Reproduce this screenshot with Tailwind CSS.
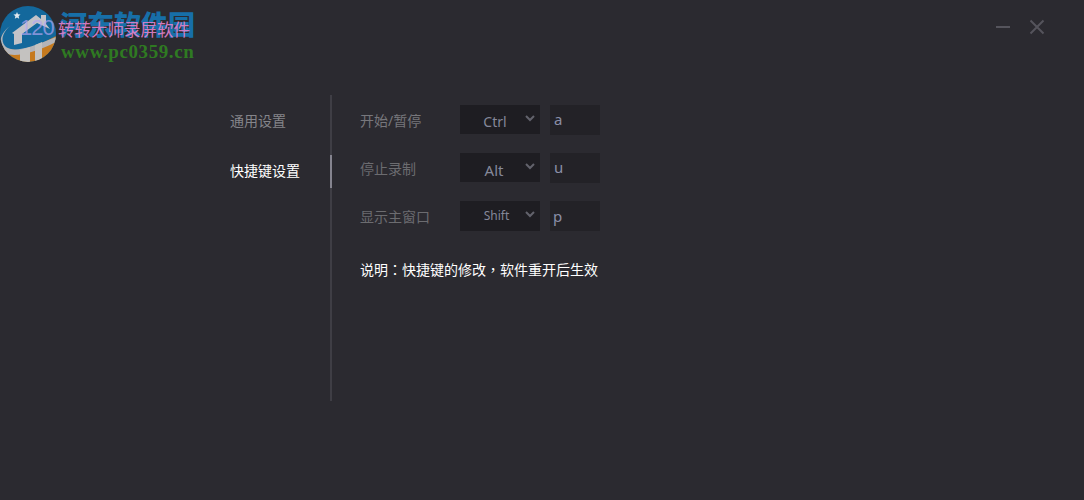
<!DOCTYPE html>
<html lang="zh">
<head>
<meta charset="utf-8">
<script src="https://cdn.jsdelivr.net/npm/@tailwindcss/browser@4"></script>
</head>
<body class="m-0 bg-[#2b2a30]">
<div class="relative w-[1084px] h-[500px] overflow-hidden bg-[#2b2a30] font-['Noto_Sans','Noto_Sans_CJK_SC',sans-serif]">
  <!-- header -->
  <header class="h-[95px] relative">
    <svg class="absolute left-0 top-[6px]" width="56" height="56" viewBox="0 0 56 56">
      <defs><clipPath id="c"><circle cx="28" cy="28" r="28"/></clipPath></defs>
      <g clip-path="url(#c)">
        <rect width="56" height="56" fill="#13689c"/>
        <path d="M0 38 C14 50 34 42 56 30 L56 56 L0 56Z" fill="#c67a1e"/>
        <path d="M10 20 C2 27 0 36 6 41 C14 47 32 41 56 31 L56 36 C34 47 14 52 6 47 C-3 41 -1 28 10 20Z" fill="#b4b4b8"/>
        <path d="M12 27 L36 9 L41 13 L41 9 L46 9 L46 18 L50 23 L37 17 L22 28 L22 37 L14 39 L14 28Z" fill="#c3c3c8"/>
        <path d="M20 44 L30 41 L30 56 L20 56Z" fill="#c4c2c0"/>
        <path d="M35 39 L42 36 L42 56 L35 56Z" fill="#c4c2c0"/>
      </g>
      <path d="M17 6l1 2.3 2.5.2-1.9 1.7.6 2.5-2.2-1.3-2.2 1.3.6-2.5-1.9-1.7 2.5-.2z" fill="#dfe8ee"/>
    </svg>
    <span class="absolute left-[20px] top-[16px] text-[22px] leading-[24px] font-light tracking-[-1px] text-[#b3a6f2]/70 font-['Liberation_Sans',sans-serif]">120</span>
    <span class="absolute left-[60px] top-[8px] text-[27px] leading-[32px] font-black text-[#176fa8] font-['Noto_Sans_CJK_SC',sans-serif]">河东软件园</span>
    <span class="absolute left-[58px] top-[19px] text-[16.5px] leading-[20px] text-[#e884cf]/90 font-['Noto_Sans_CJK_SC',sans-serif]">转转大师录屏软件</span>
    <span class="absolute left-[61px] top-[42px] text-[19px] leading-[20px] font-bold tracking-[0.6px] text-[#2f7a22] font-['Liberation_Serif',serif]">www.pc0359.cn</span>
    <div class="absolute left-[996px] top-[19px] flex items-center gap-[19px]">
      <div class="w-[14px] h-[2px] bg-[#55545c]"></div>
      <svg width="16" height="16" viewBox="0 0 16 16" class="text-[#55545c]"><path d="M1.5 1.5L14.5 14.5M14.5 1.5L1.5 14.5" stroke="currentColor" stroke-width="2" fill="none"/></svg>
    </div>
  </header>

  <!-- body -->
  <main class="flex pl-[230px]">
    <nav class="relative w-[102px] h-[306px] border-r-2 border-[#3f3e45] text-[14px] pt-[15px] font-['Noto_Sans_CJK_SC',sans-serif]">
      <div class="h-[20px] leading-[20px] text-[#85858a]">通用设置</div>
      <div class="mt-[30px] h-[20px] leading-[20px] text-white">快捷键设置</div>
      <div class="absolute right-[-2px] top-[60px] w-[2px] h-[33px] bg-[#85848f]"></div>
    </nav>
    <section class="pl-[28px] pt-[10px]">
      <div class="flex flex-col gap-[18px]">
        <div class="flex items-start h-[30px]">
          <span class="w-[100px] pt-[6px] text-[14px] leading-[20px] text-[#77777c]">开始/暂停</span>
          <div class="relative w-[80px] h-[29px] bg-[#1e1d22] text-[14px] text-[#85889a] text-center pr-[10px] pt-[7px] leading-[20px]">Ctrl
            <svg class="absolute right-[5px] top-[10px]" width="10" height="7" viewBox="0 0 10 7"><path d="M1 1L5 5L9 1" stroke="#62626c" stroke-width="2" fill="none"/></svg>
          </div>
          <div class="ml-[10px] w-[50px] h-[30px] bg-[#232227] pl-[4px] text-[15px] leading-[29px] text-[#8a8ea8]">a</div>
        </div>
        <div class="flex items-start h-[30px]">
          <span class="w-[100px] pt-[6px] text-[14px] leading-[20px] text-[#6c6c70]">停止录制</span>
          <div class="relative w-[80px] h-[29px] bg-[#1e1d22] text-[15px] text-[#85889a] text-center pr-[12px] pt-[7px] leading-[20px]">Alt
            <svg class="absolute right-[5px] top-[10px]" width="10" height="7" viewBox="0 0 10 7"><path d="M1 1L5 5L9 1" stroke="#62626c" stroke-width="2" fill="none"/></svg>
          </div>
          <div class="ml-[10px] w-[50px] h-[30px] bg-[#232227] pl-[4px] text-[15px] leading-[29px] text-[#8a8ea8]">u</div>
        </div>
        <div class="flex items-start h-[30px]">
          <span class="w-[100px] pt-[6px] text-[14px] leading-[20px] text-[#6c6c70]">显示主窗口</span>
          <div class="relative w-[80px] h-[30px] bg-[#1e1d22] text-[12px] text-[#85889a] text-center pr-[7px] pt-[5px] leading-[20px]">Shift
            <svg class="absolute right-[5px] top-[10px]" width="10" height="7" viewBox="0 0 10 7"><path d="M1 1L5 5L9 1" stroke="#62626c" stroke-width="2" fill="none"/></svg>
          </div>
          <div class="ml-[10px] w-[50px] h-[30px] bg-[#232227] pl-[3px] text-[15px] leading-[31px] text-[#8a8ea8]">p</div>
        </div>
      </div>
      <p class="mt-[28px] text-[14px] leading-[20px] text-white font-['Noto_Sans_CJK_SC',sans-serif]">说明<span lang="zh-TW" class="font-['Noto_Sans_CJK_TC',sans-serif]">：</span>快捷键的修改<span lang="zh-TW" class="font-['Noto_Sans_CJK_TC',sans-serif]">，</span>软件重开后生效</p>
    </section>
  </main>
</div>
</body>
</html>
